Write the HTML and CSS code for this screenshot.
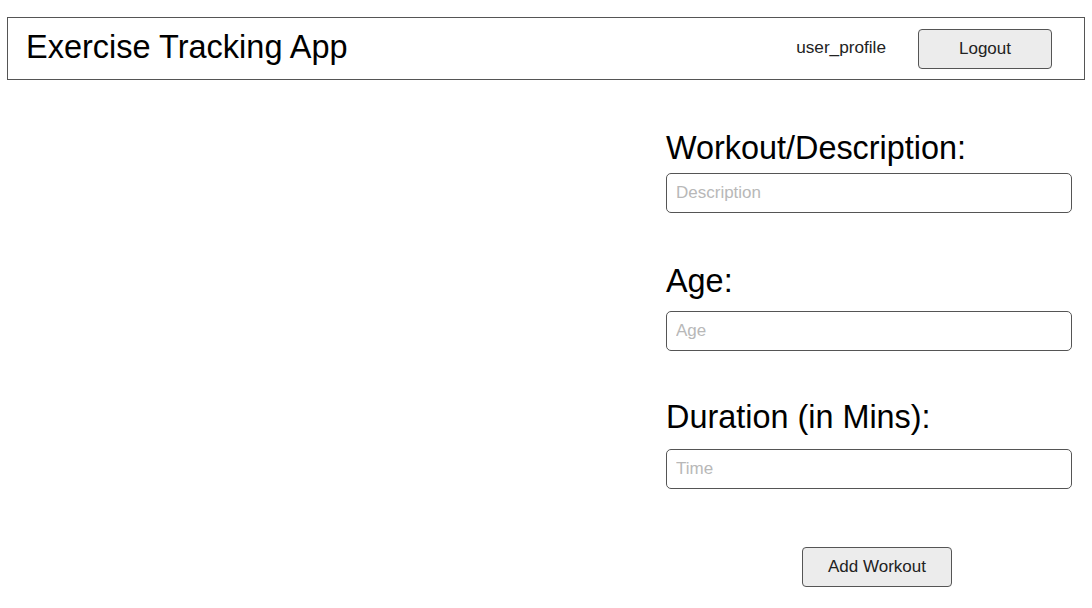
FILE: index.html
```html
<!DOCTYPE html>
<html lang="en">
<head>
<meta charset="utf-8">
<title>Exercise Tracking App</title>
<link rel="stylesheet" href="styles.css">
</head>
<body>
<header class="topbar">
  <h1 class="app-title">Exercise Tracking App</h1>
  <div class="user-area">
    <span class="username">user_profile</span>
    <button class="btn btn-logout" type="button">Logout</button>
  </div>
</header>
<main class="main">
  <form class="workout-form">
    <div class="field field-desc">
      <label class="field-label" for="desc">Workout/Description:</label>
      <input class="field-input" id="desc" type="text" placeholder="Description">
    </div>
    <div class="field field-age">
      <label class="field-label" for="age">Age:</label>
      <input class="field-input" id="age" type="text" placeholder="Age">
    </div>
    <div class="field field-time">
      <label class="field-label" for="time">Duration (in Mins):</label>
      <input class="field-input" id="time" type="text" placeholder="Time">
    </div>
    <div class="actions">
      <button class="btn btn-add" type="button">Add Workout</button>
    </div>
  </form>
</main>
</body>
</html>
```
FILE: styles.css
```css
* { box-sizing: border-box; }
html, body { margin: 0; padding: 0; background: #fff; }
body {
  font-family: "Liberation Sans", Arial, sans-serif;
  color: #000;
  width: 1092px;
}
.topbar {
  margin: 17px 7px 0 7px;
  height: 63px;
  border: 1px solid #555;
  display: flex;
  align-items: center;
  justify-content: space-between;
  padding: 0 32px 0 18px;
}
.app-title {
  margin: 0 0 3px 0;
  font-size: 32.5px;
  font-weight: normal;
  line-height: 32px;
}
.user-area {
  display: flex;
  align-items: center;
  gap: 32px;
}
.username {
  font-size: 17.2px;
  color: #222;
  margin-bottom: 2px;
}
.btn {
  font-family: "Liberation Sans", Arial, sans-serif;
  font-size: 17px;
  color: #222;
  background: #ececec;
  border: 1px solid #555;
  border-radius: 4px;
  height: 40px;
  padding: 0;
  cursor: pointer;
}
.btn-logout { width: 134px; }
.btn-add { width: 150px; }
.main {
  display: flex;
  justify-content: flex-end;
  padding-right: 4px;
}
.workout-form {
  width: 422px;
  display: flex;
  flex-direction: column;
}
.field { display: flex; flex-direction: column; }
.field-label {
  font-size: 32.4px;
  line-height: 37px;
  color: #000;
}
.field-input {
  width: 406px;
  height: 40px;
  border: 1px solid #555;
  border-radius: 5px;
  padding: 0 9px;
  font-family: "Liberation Sans", Arial, sans-serif;
  font-size: 17px;
  color: #222;
  outline: none;
}
.field-input::placeholder { color: #b8b8b8; }
.field-desc { margin-top: 50px; }
.field-desc .field-label { margin-bottom: 6px; }
.field-age { margin-top: 50px; }
.field-age .field-label { margin-bottom: 11px; }
.field-time { margin-top: 48px; }
.field-time .field-label { margin-bottom: 13px; }
.actions {
  margin-top: 58px;
  display: flex;
  justify-content: center;
}
```
